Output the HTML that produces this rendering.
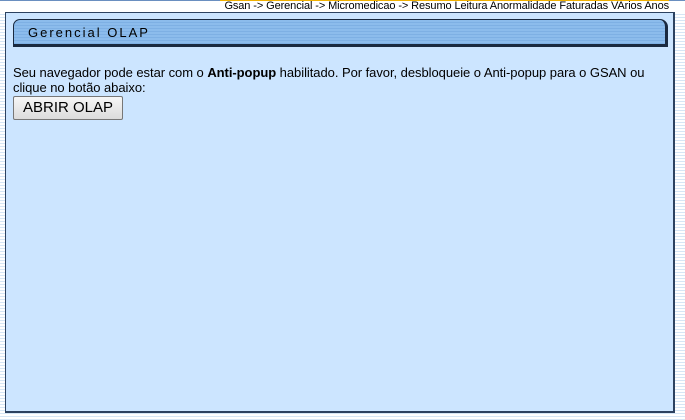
<!DOCTYPE html>
<html><head><style>
body{margin:0;width:685px;height:420px;overflow:hidden;font-family:"Liberation Sans",Arial,sans-serif;
background:repeating-linear-gradient(to bottom,#ffffff 0,#ffffff 2px,#d6e6f5 2px,#d6e6f5 3px);position:relative}
.top{position:absolute;left:0;top:0;width:685px;height:11px;background:#fff;border-top:1px solid #6a8fc0}
.crumb{position:absolute;right:16px;top:0;font-size:11px;line-height:11px;color:#000;background:#fff;border-top:1px solid #f0b000;padding-left:4px;letter-spacing:-0.1px}
.panel{position:absolute;left:5px;top:12px;width:667px;height:398px;background:#cce5ff;border:1px solid #2c4260;border-width:1px 2px 2px 1px}
.tab{position:absolute;left:7px;top:6px;width:651px;height:24px;border:1px solid #1a2a40;border-width:1px 3px 3px 1px;border-radius:7px 8px 0 0;
background:repeating-linear-gradient(to bottom,#8cbcec 0,#8cbcec 2px,#7eb0e4 2px,#7eb0e4 3px)}
.tab span{position:absolute;left:14px;top:5px;font-size:13px;letter-spacing:2px;color:#000}
.txt{position:absolute;left:7px;top:52px;font-size:13px;line-height:15px;color:#000;width:650px;letter-spacing:-0.05px}
.btn{position:absolute;left:7px;top:83px;width:108px;height:22px;border:1px solid #777;border-radius:2px;background:linear-gradient(#f6f6f6,#dcdcdc);font-size:15px;text-align:center;line-height:22px}
</style></head><body>
<div class="top"></div>
<div class="crumb">Gsan -&gt; Gerencial -&gt; Micromedicao -&gt; Resumo Leitura Anormalidade Faturadas VArios Anos</div>
<div class="panel">
<div class="tab"><span>Gerencial OLAP</span></div>
<div class="txt">Seu navegador pode estar com o <b>Anti-popup</b> habilitado. Por favor, desbloqueie o Anti-popup para o GSAN ou clique no botão abaixo:</div>
<div class="btn">ABRIR OLAP</div>
</div>
</body></html>
